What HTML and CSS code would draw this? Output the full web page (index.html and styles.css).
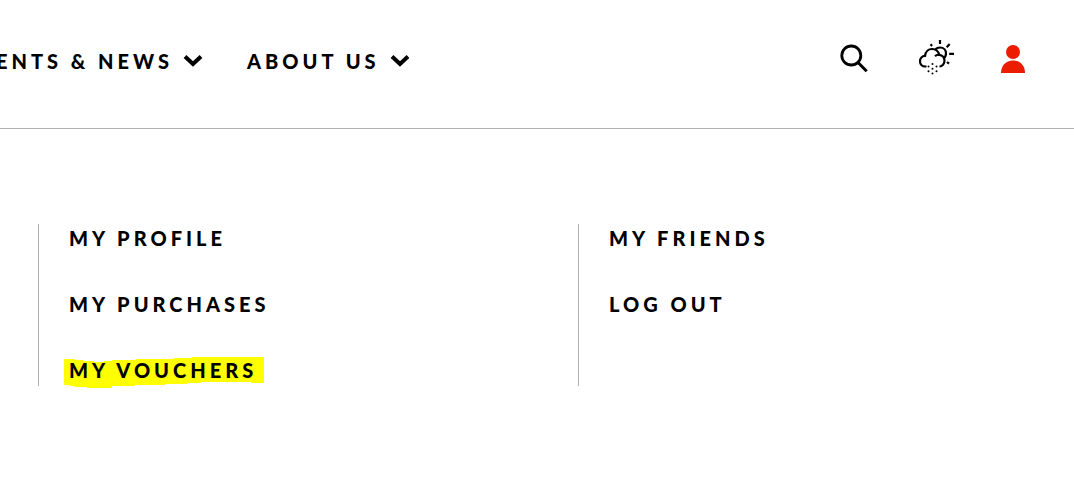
FILE: index.html
```html
<!DOCTYPE html>
<html lang="en">
<head>
<meta charset="utf-8">
<title>My account</title>
<meta name="viewport" content="width=device-width, initial-scale=1">
<link rel="stylesheet" href="styles.css">
</head>
<body>
<header class="header">
  <nav class="nav" aria-label="Main">
    <button class="nav-item" type="button">ENTS &amp; NEWS
      <svg class="chevron" viewBox="0 0 20 14" aria-hidden="true"><path d="M2 2.500l8 7.500 8-7.500"/></svg>
    </button>
    <button class="nav-item" type="button">ABOUT US
      <svg class="chevron" viewBox="0 0 20 14" aria-hidden="true"><path d="M2 2.500l8 7.500 8-7.500"/></svg>
    </button>
  </nav>
  <div class="tools">
    <button class="tool" type="button" aria-label="Search">
      <svg viewBox="0 0 36 36"><circle cx="12.300" cy="15.500" r="9.500" fill="none" stroke="#000" stroke-width="2.800"/><path d="M19 22.500l8.700 8.700" stroke="#000" stroke-width="3"/></svg>
    </button>
    <button class="tool" type="button" aria-label="Weather">
      <svg class="weather" viewBox="-1 0 36 36" fill="none" stroke="#000" stroke-width="2.200">
        <path d="M8.500 26.500H7.500C4 26.500 2 24 2 21.200c0-3 2.200-5.200 5.100-5.400C7.500 11.500 10.500 9 14 9c3.600 0 6.300 2 7.200 5.800 3.400.2 5.300 2.800 5.300 5.700 0 3.300-2.200 6-5 6"/>
        <path d="M17 10.200c1.200-2 3-2.700 5-2.700 3.700 0 6 2.700 6 6 0 2.300-1 4-2.800 5.200M21.200 14.800c-1.800-.2-3.200.4-4.200 1.500"/>
        <path d="M22 0v4M28.700 7.200l3-3.200M31.200 13.800H36M29 22l2 1.700M12.500 4.200l1.600 1.700"/>
        <g fill="#000" stroke="none"><circle cx="14.500" cy="24" r="1"/><circle cx="10.500" cy="26.500" r="1"/><circle cx="18.500" cy="26.500" r="1"/><circle cx="14.500" cy="28.800" r="1"/><circle cx="10.500" cy="31.200" r="1"/><circle cx="18.500" cy="31.200" r="1"/><circle cx="14.500" cy="33.500" r="1"/></g>
      </svg>
    </button>
    <button class="tool" type="button" aria-label="Account">
      <svg viewBox="0 0 36 36" fill="#eb1c00"><circle cx="18" cy="12" r="7"/><path d="M6 33c0-7.500 5-12.500 12-12.500S30 25.500 30 33z"/></svg>
    </button>
  </div>
</header>
<main class="menu">
  <ul class="column">
    <li><a class="link" href="#">MY PROFILE</a></li>
    <li><a class="link" href="#">MY PURCHASES</a></li>
    <li><a class="link marked" href="#"><svg class="marker" viewBox="0 0 200 31" preserveAspectRatio="none" aria-hidden="true"><path fill="#ff0" d="M0 2h11v1h8v1h11v1h10v-1h8v-1h24v-1h38v-1h18V0h80v26h-21v-1h-50v1h-14v1h-22v1H71v1H60v-1h-1v1H48v2H23v-1H11v-1H6v-1H0z"/></svg><span class="label">MY VOUCHERS</span></a></li>
  </ul>
  <ul class="column">
    <li><a class="link" href="#">MY FRIENDS</a></li>
    <li><a class="link" href="#">LOG OUT</a></li>
  </ul>
</main>
</body>
</html>
```
FILE: styles.css
```css
* { box-sizing: border-box; }

body {
  margin: 0;
  overflow-x: hidden;
  background: #fff;
  color: #000;
  font: 900 20px/28px Lato, "Liberation Sans", sans-serif;
  letter-spacing: 4px;
}

button {
  padding: 0;
  border: 0;
  background: none;
  color: inherit;
  font: inherit;
  letter-spacing: inherit;
  cursor: pointer;
}

.header {
  display: flex;
  align-items: center;
  justify-content: space-between;
  padding: 40px 43px 52px 0;
  border-bottom: 1px solid #b0b0b0;
}

.nav {
  display: flex;
  gap: 44px;
  padding-top: 5px;
  margin-left: -4px;
}

.nav-item {
  display: flex;
  align-items: center;
  gap: 10px;
  white-space: nowrap;
}

.chevron {
  width: 20px;
  height: 14px;
  fill: none;
  stroke: #000;
  stroke-width: 4;
}

.tools {
  display: flex;
  gap: 42px;
}

.tool {
  width: 36px;
  height: 36px;
}

.tool svg {
  display: block;
  width: 100%;
}

.tool .weather {
  overflow: visible;
}

.menu {
  display: grid;
  grid-template-columns: 1fr 1fr;
  padding: 95px 0 95px 38px;
  margin-right: -44px;
}

.column {
  display: flex;
  flex-direction: column;
  gap: 38px;
  margin: 0;
  padding: 0 0 2px 30px;
  border-left: 1px solid #b0b0b0;
  list-style: none;
}

.link {
  display: inline-block;
  color: inherit;
  text-decoration: none;
}

.marked {
  position: relative;
}

.marker {
  position: absolute;
  top: 1px;
  left: -5px;
  width: 200px;
  height: 31px;
}

.label {
  position: relative;
}
```
